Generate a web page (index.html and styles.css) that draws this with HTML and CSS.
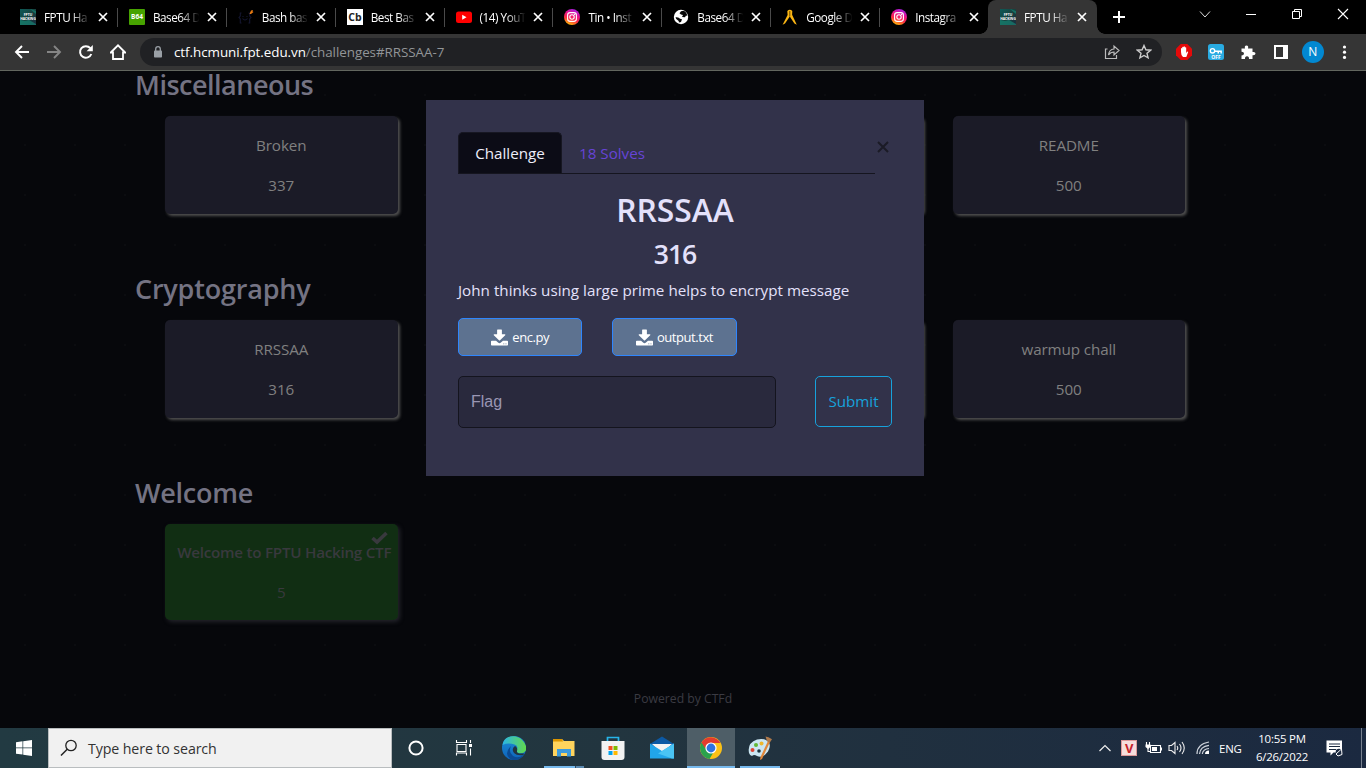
FILE: index.html
```html
<!DOCTYPE html>
<html lang="en">
<head>
<meta charset="utf-8">
<title>FPTU Hacking CTF</title>
<link rel="stylesheet" href="styles.css">
</head>
<body>
<svg class="defs" width="0" height="0">
  <defs>
    <linearGradient id="ig" x1="0.7" y1="0" x2="0.3" y2="1"><stop offset="0" stop-color="#a01fe8"/><stop offset=".35" stop-color="#e8118c"/><stop offset=".65" stop-color="#fb2a45"/><stop offset="1" stop-color="#ffc400"/></linearGradient>
    <linearGradient id="fp" x1="0" y1="0" x2="1" y2="1"><stop offset="0" stop-color="#0d5a57"/><stop offset=".5" stop-color="#17423f"/><stop offset="1" stop-color="#1b2b3f"/></linearGradient>
    <linearGradient id="edge1" x1="0" y1="0" x2="1" y2="0"><stop offset="0" stop-color="#2bb5e5"/><stop offset="1" stop-color="#62d94b"/></linearGradient>
    <linearGradient id="edge2" x1="0" y1="0" x2="0" y2="1"><stop offset="0" stop-color="#1c8fd8"/><stop offset="1" stop-color="#0e62b8"/></linearGradient>
    <symbol id="x" viewBox="0 0 10 10"><path d="M1 1l8 8M9 1l-8 8" stroke="#fff" stroke-width="1.7" fill="none"/></symbol>
    <symbol id="insta" viewBox="0 0 16 16"><circle cx="8" cy="8" r="8" fill="url(#ig)"/><rect x="3.6" y="3.6" width="8.8" height="8.8" rx="2.6" fill="none" stroke="#fff" stroke-width="1.1"/><circle cx="8" cy="8" r="2.2" fill="none" stroke="#fff" stroke-width="1.1"/><circle cx="10.6" cy="5.4" r=".6" fill="#fff"/></symbol>
    <symbol id="fptu" viewBox="0 0 16 16"><rect width="16" height="16" fill="url(#fp)"/><path d="M0 11l5 1 4-1 7 4v1H0zM10 0l6 5V2z" fill="#16917b" opacity=".6"/><text x="8" y="7.2" class="fav-tiny">FPTU</text><text x="8" y="11" class="fav-tiny">HACKING</text></symbol>
    <symbol id="download" viewBox="0 0 512 512"><path fill="#fff" d="M200 16h112q16 0 16 16v128h88q28 3 12 26L272 342q-16 14-32 0L84 186q-14-22 12-26h88V32q0-16 16-16zM24 352h128l60 58q44 32 88 0l60-58h128q24 0 24 24v96q0 24-24 24H24q-24 0-24-24v-96q0-24 24-24z"/><path fill="#5d7290" d="M370 440h30v20h-30zM436 440h30v20h-30z"/></symbol>
  </defs>
</svg>
<div class="screen">
  <header class="tabs">
    <div class="tab"><svg class="fav"><use href="#fptu"/></svg><span class="title">FPTU Ha</span><svg class="close"><use href="#x"/></svg></div>
    <div class="tab"><svg class="fav" viewBox="0 0 16 16"><rect width="16" height="16" rx="1" fill="#47a300"/><text x="8" y="10.4" class="fav-b64">B64</text></svg><span class="title">Base64 D</span><svg class="close"><use href="#x"/></svg></div>
    <div class="tab"><svg class="fav" viewBox="0 0 16 16"><path d="M3.500 4H2.300v3L1 8.500 2.300 10v4h1.200M10.500 4h1.200v3L13 8.500 11.700 10v4h-1.200M4.500 9.500q2.500 3 5 0M5 7v1M9 7v1" fill="none" stroke="#141630" stroke-width="1.100"/><path d="M11.500 5L13 1.500l2-.5-.5 1.500 1 .5-2.500 2z" fill="#e97b12"/></svg><span class="title">Bash bas</span><svg class="close"><use href="#x"/></svg></div>
    <div class="tab"><svg class="fav" viewBox="0 0 16 16"><rect width="16" height="16" fill="#fff"/><text x="8" y="11.500" class="fav-cb">Cb</text></svg><span class="title">Best Bas</span><svg class="close"><use href="#x"/></svg></div>
    <div class="tab"><svg class="fav" viewBox="0 0 16 16"><rect y="2.500" width="16" height="11.500" rx="2.500" fill="#f00"/><path d="M6.200 5.800v5l4.300-2.500z" fill="#fff"/></svg><span class="title">(14) YouT</span><svg class="close"><use href="#x"/></svg></div>
    <div class="tab"><svg class="fav"><use href="#insta"/></svg><span class="title">Tin • Inst</span><svg class="close"><use href="#x"/></svg></div>
    <div class="tab"><svg class="fav" viewBox="0 0 16 16"><circle cx="8" cy="8" r="7.200" fill="#fff"/><path d="M2.500 8.300q3.500-.5 4.500 1.500l2 .5-1 2.700-2 .5q0-2-1.500-2.500T2.500 8.300zM8 2.200l-1.500 2L8 5.500l2 .5-1 2 3 .3 1-1.800 1.200.5Q14 3 10.500 1.800z" fill="#080808"/></svg><span class="title">Base64 D</span><svg class="close"><use href="#x"/></svg></div>
    <div class="tab"><svg class="fav" viewBox="0 0 16 16"><path d="M5.300 2q2.500-2.500 5 0l-.2 3.800 4.700 10-2.400-1.300L7.800 7.500 3 14.500.6 15.800 5.600 6z" fill="#fbb614"/><path d="M7.800 2v5.500" stroke="#6b4a00"/></svg><span class="title">Google D</span><svg class="close"><use href="#x"/></svg></div>
    <div class="tab last"><svg class="fav"><use href="#insta"/></svg><span class="title">Instagra</span><svg class="close"><use href="#x"/></svg></div>
    <div class="tab active"><svg class="fav"><use href="#fptu"/></svg><span class="title">FPTU Ha</span><svg class="close"><use href="#x"/></svg></div>
    <svg class="plus" viewBox="0 0 12 12"><path d="M6 0v12M0 6h12" stroke="#fff" stroke-width="2"/></svg>
    <div class="controls">
      <svg viewBox="0 0 46 28"><path d="M18 11.500l5 5.500 5-5.500" fill="none" stroke="#ddd"/></svg>
      <svg viewBox="0 0 46 28"><path d="M18 14.500h10" stroke="#fff"/></svg>
      <svg viewBox="0 0 46 28"><path d="M18.500 11.500h7v7h-7zM20.500 11.500v-2h7v7h-2" fill="none" stroke="#fff"/></svg>
      <svg viewBox="0 0 46 28"><path d="M18 9l10 10M28 9L18 19" stroke="#fff" stroke-width="1.100"/></svg>
    </div>
  </header>
  <nav class="toolbar">
    <svg class="nav" viewBox="0 0 16 16"><path d="M15 8H2M8 2L2 8l6 6" fill="none" stroke="#fff" stroke-width="1.900"/></svg>
    <svg class="nav" viewBox="0 0 16 16"><path d="M1 8h13M8 2l6 6-6 6" fill="none" stroke="#858585" stroke-width="1.900"/></svg>
    <svg class="nav" viewBox="0 0 16 16"><path d="M13.300 10A5.800 5.800 0 1 1 12.300 4.200" fill="none" stroke="#fff" stroke-width="2"/><path d="M14.800 1v6.200H8.600z" fill="#fff"/></svg>
    <svg class="nav" viewBox="0 0 16 16"><path d="M.8 8.500L8 1.300l7.200 7.200H13V15H3V8.500z" fill="none" stroke="#fff" stroke-width="1.800"/></svg>
    <div class="address">
      <svg class="lock" viewBox="0 0 10 12"><rect x="1" y="4.500" width="8" height="7" rx=".8" fill="#9aa0a6"/><path d="M2.700 5V3a2.300 2.300 0 0 1 4.600 0v2" fill="none" stroke="#9aa0a6" stroke-width="1.300"/></svg>
      <span class="host">ctf.hcmuni.fpt.edu.vn</span><span class="path">/challenges#RRSSAA-7</span>
      <svg class="share" viewBox="0 0 16 16"><path d="M3.500 5H1.500v9.500h11V11" fill="none" stroke="#bbb" stroke-width="1.200"/><path d="M4.500 11q.5-5.500 5.500-6V2l5 4.500-5 4.500V8Q6.500 8 4.500 11z" fill="none" stroke="#bbb" stroke-width="1.200"/></svg>
      <svg class="star" viewBox="0 0 16 16"><path d="M8 1.500l1.900 4.300 4.700.4-3.600 3.100 1.100 4.600L8 11.500l-4.100 2.400L5 9.300 1.400 6.200l4.700-.4z" fill="none" stroke="#ccc" stroke-width="1.400"/></svg>
    </div>
    <div class="extensions">
      <svg viewBox="0 0 16 16"><path d="M4.700 0h6.600L16 4.700v6.600L11.300 16H4.700L0 11.300V4.700z" fill="#e50a0a"/><path d="M5 8V4.500q.6-.8 1.200 0V7V3.200q.7-.8 1.300 0V7V2.700q.7-.8 1.400 0V7V3.600q.7-.8 1.300 0V9l1-1.300q1-.5 1 .3L10.300 13H7Q5 11.500 5 8z" fill="#fff"/></svg>
      <svg viewBox="0 0 16 16"><rect width="16" height="16" rx="2.500" fill="#29abe2"/><circle cx="4.500" cy="6.800" r="2.200" fill="none" stroke="#fff" stroke-width="1.400"/><path d="M6.700 6.500h7.200v3h-1.500V8H11v1.500H9.500V8H6.700z" fill="#fff"/><text x="8" y="15" class="off">OFF</text></svg>
      <svg viewBox="0 0 16 16"><path d="M1.500 4.500H5q-.8-3 1.500-3t1.500 3h4.500V8q3-.5 3 1.500t-3 1.700V15H9q.2-2.800-2-2.800T5 15H1.500v-3.500q2.500 0 2.500-1.900T1.500 7.800z" fill="#fff"/></svg>
      <svg viewBox="0 0 16 16"><path d="M1 1h14v14H1zM3 3v10h7V3z" fill="#fff" fill-rule="evenodd"/></svg>
      <span class="avatar">N</span>
      <svg viewBox="0 0 16 16"><g fill="#fff"><circle cx="8.500" cy="3" r="1.600"/><circle cx="8.500" cy="8.200" r="1.600"/><circle cx="8.500" cy="13.400" r="1.600"/></g></svg>
    </div>
  </nav>
  <main class="page">
    <section class="category">
      <h2 class="misc">Miscellaneous</h2>
      <div class="cards">
        <div class="card"><p>Broken</p><p>337</p></div>
        <div class="card"></div>
        <div class="card"></div>
        <div class="card"><p>README</p><p>500</p></div>
      </div>
    </section>
    <section class="category">
      <h2 class="crypto">Cryptography</h2>
      <div class="cards">
        <div class="card"><p>RRSSAA</p><p>316</p></div>
        <div class="card"></div>
        <div class="card"></div>
        <div class="card"><p>warmup chall</p><p>500</p></div>
      </div>
    </section>
    <section class="category">
      <h2 class="welcome">Welcome</h2>
      <div class="cards">
        <div class="card solved"><svg class="check" viewBox="0 0 17 13"><path d="M1.500 6.500l4.500 4L15.500 1.500" fill="none" stroke="#39393e" stroke-width="3.600"/></svg><p class="long">Welcome to FPTU Hacking CTF</p><p>5</p></div>
      </div>
    </section>
    <footer class="powered">Powered by CTFd</footer>
    <div class="modal">
      <div class="modal-head">
        <div class="modal-tabs"><span class="modal-tab current">Challenge</span><span class="modal-tab">18 Solves</span></div>
        <svg class="dismiss" viewBox="0 0 12 12"><path d="M1 1l10 10M11 1L1 11" stroke="#1b1b26" stroke-width="2"/></svg>
      </div>
      <h3 class="name">RRSSAA</h3>
      <h4 class="value">316</h4>
      <p class="desc">John thinks using large prime helps to encrypt message</p>
      <div class="files">
        <a class="file"><svg><use href="#download"/></svg><span>enc.py</span></a>
        <a class="file"><svg><use href="#download"/></svg><span>output.txt</span></a>
      </div>
      <div class="answer"><div class="flag">Flag</div><div class="submit">Submit</div></div>
    </div>
  </main>
  <footer class="taskbar">
    <div class="start"><svg viewBox="0 0 16 16"><path d="M0 2.200L6.500 1.300v6.200H0zM7.200 1.200L16 0v7.500H7.200zM0 8.300h6.500v6.300L0 13.700zM7.200 8.300H16V16l-8.800-1.200z" fill="#fff"/></svg></div>
    <div class="search"><svg viewBox="0 0 18 18"><circle cx="11" cy="6.500" r="5.200" fill="none" stroke="#222" stroke-width="1.300"/><path d="M7.200 10.200L1 16.500" stroke="#222" stroke-width="1.500"/></svg><span>Type here to search</span></div>
    <div class="apps">
      <div class="app"><svg viewBox="0 0 24 24"><circle cx="12" cy="12" r="6.600" fill="none" stroke="#fff" stroke-width="2"/></svg></div>
      <div class="app"><svg viewBox="0 0 24 24"><path d="M3.500 4v2.500h10V4M4 8.500h9v7H4zM3.500 19.500v-2.500h10v2.500M17.500 4v3M17.500 12.500v7" fill="none" stroke="#fff" stroke-width="1.100"/><path d="M16 8h3v3h-3z" fill="#fff"/></svg></div>
      <div class="app edge"><svg viewBox="0 0 24 24"><circle cx="12" cy="12" r="12" fill="url(#edge2)"/><path d="M.5 9C2-1 14-2 20 4q6 6 3.500 11-2 3-6.500 2.200-4-1-2-3.700 1.500-3.500-2.500-5Q6 6.500.5 9z" fill="url(#edge1)"/><path d="M9 10q-3 6 2 10 5 3 10.500-1Q16 26 9 23.500 1 18 9 10z" fill="#0b4a93"/><path d="M13 10q3 2 2 5-1 3 7 2.500l-.5 1.500Q15 20 12 17q-3-4 1-7z" fill="#21343f"/></svg></div>
      <div class="app running split"><svg viewBox="0 0 24 24"><path d="M1 3h9l2 2h10.500v15H1z" fill="#ffd45d"/><path d="M1 3h9l1 2.500H1z" fill="#dc9500"/><path d="M5 13h14v7.500h-4V17H9v3.500H5z" fill="#3d9bdc"/></svg></div>
      <div class="app"><svg viewBox="0 0 24 24"><path d="M6.500 6V1.500h11V6" fill="none" stroke="#27b5e9" stroke-width="1.700"/><path d="M.5 5h23v16q0 3-3 3h-17q-3 0-3-3z" fill="#f2f2f2"/><path d="M7.500 10h4v4h-4z" fill="#f25022"/><path d="M12.500 10h4v4h-4z" fill="#7fba00"/><path d="M7.500 15h4v4h-4z" fill="#00a4ef"/><path d="M12.500 15h4v4h-4z" fill="#ffb900"/></svg></div>
      <div class="app"><svg viewBox="0 0 24 24"><path d="M0 8l12-7.500L24 8v4H0z" fill="#0c59a4"/><path d="M2 8h20l-8 8h-4z" fill="#f3f3f3"/><path d="M0 7.500L12 15l12-7.500v15H0z" fill="#21a5ea"/><path d="M24 7.500L8 17.500l14 5h2z" fill="#4ac4f4"/></svg></div>
      <div class="app current running"><svg viewBox="0 0 24 24"><circle cx="12" cy="12" r="11" fill="#fbc116"/><path d="M12 12L2.500 6.500a11 11 0 0 0 8 16.400L17 12z" fill="#2ba24c"/><path d="M12 12H6L2.500 6.500A11 11 0 0 1 21.500 7H12z" fill="#e33b2e"/><circle cx="12" cy="12" r="5.600" fill="#fff"/><circle cx="12" cy="12" r="4.400" fill="#2f73e0"/></svg></div>
      <div class="app running"><svg viewBox="0 0 24 24"><path d="M1 17Q-1 7 9 3.500q8-2 12 3 2 4-1 9-5 7-11 4.500-3-2-5 0Q2 20 1 17z" fill="#cbe6f2"/><circle cx="4.500" cy="14" r="2" fill="#df4434"/><circle cx="8" cy="9" r="2" fill="#61b935"/><circle cx="13.500" cy="7.500" r="2" fill="#eeb72c"/><circle cx="11" cy="15" r="1.800" fill="#1a3340"/><path d="M20 5l2 1-8 17-2 1 .5-3z" fill="#df873b"/><path d="M17.500.5l3 .8 3.500 2-2 3-3-1z" fill="#ae794b"/></svg></div>
    </div>
    <div class="tray">
      <svg class="up" viewBox="0 0 12 8"><path d="M.5 7L6 1.500 11.500 7" fill="none" stroke="#eee" stroke-width="1.200"/></svg>
      <span class="vkey">V</span>
      <svg class="power" viewBox="0 0 17 14"><path d="M5.500 4.500h10v7h-10zM16.500 6.500v3M1.500 1v3M4.500 1v3M3 7v3.500h2" fill="none" stroke="#fff" stroke-width="1.100"/><path d="M.5 3.500h5V6L3 8 .5 6zM7 6h5v4H7z" fill="#fff"/></svg>
      <svg class="volume" viewBox="0 0 17 14"><path d="M1 4.500h2.500L7 1.500v11L3.500 9.500H1zM9 5q1.500 2 0 4M11.500 3q3 4 0 8M14 1q4.500 6 0 12" fill="none" stroke="#eee" stroke-width="1.100"/></svg>
      <svg class="wifi" viewBox="0 0 14 14"><path d="M1 13Q1 3 13 1M3.500 13Q4 5.500 13 4.300M6.300 13Q7 8 13 7.500" fill="none" stroke="#ccd2da" stroke-width="1.200"/><path d="M9 13q0-3.500 4-3.500V13z" fill="#fff"/></svg>
      <span class="lang">ENG</span>
      <div class="clock"><span>10:55 PM</span><span>6/26/2022</span></div>
      <svg class="notes" viewBox="0 0 17 17"><path d="M.5.500h15.500v12H7.500L4.500 15.500v-3h-4z" fill="#fff"/><path d="M3 4h11M3 6.500h11M3 9.500h7" stroke="#1b2940"/><circle cx="13" cy="12" r="3.300" fill="#1b2940"/><path d="M10 14l5.500-5 .5 5.500-4 1.500z" fill="#1b2940" stroke="#fff"/></svg>
      <span class="desktop"></span>
    </div>
  </footer>
</div>
</body>
</html>
```
FILE: styles.css
```css
* { box-sizing: border-box; }
body { margin: 0; overflow: hidden; font-family: "Open Sans", "Noto Sans", sans-serif; }
h2, h3, h4, p { margin: 0; }
.defs { display: block; position: absolute; }
.screen { width: 1366px; height: 768px; display: flex; flex-direction: column; }

.tabs { height: 34px; flex: none; display: flex; background: #000; padding-left: 9px; }
.tab { width: 108.9px; height: 34px; flex: none; display: flex; align-items: center; padding: 0 10px 0 11px; position: relative; }
.tab::after { content: ""; position: absolute; right: 0; top: 8px; width: 1px; height: 19px; background: #4a4a4a; }
.tab.last::after, .tab.active::after { display: none; }
.fav { width: 16px; height: 16px; flex: none; margin-right: 8px; }
.title { width: 49px; margin-right: 5px; white-space: nowrap; color: #fff; font-size: 11.700px; line-height: 18px; letter-spacing: -.45px; -webkit-mask-image: linear-gradient(90deg, #000 55%, transparent 95%); mask-image: linear-gradient(90deg, #000 55%, transparent 95%); }
.close { width: 10px; height: 10px; flex: none; }
.tab.active { background: #353535; border-radius: 8px 8px 0 0; margin-left: -1px; padding-left: 12px; }
.tab.active::before { content: ""; position: absolute; z-index: 1; bottom: 0; left: -8px; width: 125px; height: 8px; background: radial-gradient(circle at 0 0, transparent 7.500px, #353535 8px) 0 0 / 8px 8px no-repeat, radial-gradient(circle at 100% 0, transparent 7.500px, #353535 8px) 100% 0 / 8px 8px no-repeat; }
.plus { width: 12px; height: 12px; margin: 11px 0 0 16px; }
.controls { display: flex; margin-left: auto; }
.controls svg { width: 46px; height: 28px; }
.fav-tiny, .fav-b64, .fav-cb, .off { font-family: "Open Sans", sans-serif; font-weight: 700; text-anchor: middle; fill: #fff; }
.fav-tiny { font-size: 3.400px; }
.fav-b64 { font-size: 6.500px; }
.fav-cb { font-size: 10.500px; fill: #222; }
.off { font-size: 5px; }

.toolbar { height: 37px; flex: none; display: flex; align-items: center; background: #353535; border-bottom: 1px solid #62665f; padding: 0 14px 0 14px; }
.nav { width: 16px; height: 16px; margin-right: 16px; flex: none; }
.address { width: 1022px; height: 28px; display: flex; align-items: center; border-radius: 14px; background: #202124; margin-left: -2px; padding: 0 10px 0 13px; font-size: 13.400px; letter-spacing: -.05px; white-space: nowrap; }
.lock { width: 10px; height: 12px; margin-right: 11px; }
.host { color: #fff; }
.path { color: #929598; }
.share { width: 16px; height: 16px; margin-left: auto; }
.star { width: 16px; height: 16px; margin-left: 16px; }
.extensions { flex: 1; display: flex; align-items: center; justify-content: space-between; padding-left: 14px; }
.extensions svg { width: 16px; height: 16px; }
.extensions svg:last-child { margin-left: -1px; }
.avatar { width: 22px; height: 22px; border-radius: 50%; background: #0288d1; color: #fff; text-align: center; font-size: 12px; line-height: 22px; margin: 0 -3px; }

.page { height: 657px; flex: none; position: relative; padding: 0 135px; background: radial-gradient(circle, #0b0c10 0 1px, transparent 1.500px) 0 -1px / 50px 50px #06070b; }
.category { height: 204px; }
.category h2 { height: 45px; font-size: 27px; line-height: 28px; font-weight: 600; color: #747383; }
.category .misc { letter-spacing: -.5px; }
.category .crypto { letter-spacing: -.2px; line-height: 27px; }
.category .welcome { letter-spacing: -.25px; line-height: 27px; }
.cards { display: grid; grid-template-columns: repeat(4, 232.500px); column-gap: 30px; padding-left: 30px; }
.card { height: 98px; border-radius: 5px; background: #1b1b27; box-shadow: 2px 2px 3px #505050; color: #808080; text-align: center; font-size: 15.200px; line-height: 24px; letter-spacing: -.1px; padding-top: 17px; position: relative; }
.card p + p { margin-top: 16px; }
.solved { height: 96px; padding-top: 16px; background: #112e13; color: #39393e; box-shadow: 2px 2px 4px #24242b; }
.long { font-weight: 600; white-space: nowrap; margin-left: 6px; letter-spacing: -.25px; }
.check { position: absolute; right: 10px; top: 7px; width: 17px; height: 14px; }
.powered { color: #3b3b43; text-align: center; font-size: 12.200px; line-height: 18px; margin-top: 7px; }

.modal { position: absolute; left: 426px; top: 29px; width: 498px; height: 376px; padding: 32px; background: #32324a; color: #e4e1fb; font-size: 15.200px; }
.modal-head { display: flex; height: 42px; }
.modal-tabs { width: 417px; display: flex; border-bottom: 1px solid #15151f; }
.modal-tab { padding: 0 17px; line-height: 42px; color: #6644d6; }
.modal-tab.current { width: 104px; padding: 0; text-align: center; line-height: 40px; color: #eeeefa; background: #0c0c16; border: 1px solid #171722; border-bottom: 0; border-radius: 5px 5px 0 0; }
.dismiss { width: 12px; height: 12px; margin: 9px 0 0 2px; }
.name { height: 48px; margin-top: 16px; text-align: center; font-size: 31.800px; line-height: 40px; font-weight: 600; }
.value { height: 36px; text-align: center; font-size: 26.600px; line-height: 32px; font-weight: 600; letter-spacing: -1px; }
.desc { line-height: 32px; height: 44px; letter-spacing: .02px; white-space: nowrap; }
.files { display: flex; gap: 30px; }
.file { width: 124.300px; height: 38px; display: flex; align-items: center; justify-content: center; gap: 4px; border: 1px solid #2e86ff; border-radius: 5px; background: #5d7290; color: #fff; font-size: 13px; letter-spacing: -.45px; }
.file svg { width: 17px; height: 17px; margin-top: 0; }
.answer { display: flex; justify-content: space-between; width: 434px; margin-top: 20px; }
.flag { width: 318px; height: 52px; padding-left: 12px; border: 1px solid #14141e; border-radius: 5px; background: #29293d; color: #9a96b4; font: 16px/49px "Liberation Sans", Arial, sans-serif; }
.submit { width: 77px; height: 51px; border: 1px solid #17a2dc; border-radius: 5px; color: #17a2dc; text-align: center; line-height: 49px; }

.taskbar { height: 40px; flex: none; display: flex; background: linear-gradient(90deg, #223a42, #22353f 45%, #20303f 65%, #1b2940); color: #fff; }
.start { width: 48px; display: flex; align-items: center; justify-content: center; }
.start svg { width: 16px; height: 16px; }
.search { width: 344px; display: flex; align-items: center; gap: 10px; background: #f1f1f1; border: 1px solid #b9bdbf; padding-left: 11px; color: #333; font-size: 14.200px; letter-spacing: -.1px; }
.search svg { width: 18px; height: 18px; }
.apps { display: flex; }
.app { width: 48px; margin-right: 1.200px; height: 40px; display: flex; align-items: center; justify-content: center; position: relative; }
.app svg { width: 24px; height: 24px; }
.app.running::after { content: ""; position: absolute; left: 4px; right: 4px; bottom: 0; height: 2px; background: #76b9ed; }
.app.split::after { background: linear-gradient(90deg, #76b9ed 31px, #33485a 31px 32px, #5a89b0 32px); }
.app.current { background: #4e5e67; }
.app.current::after { left: 0; right: 0; }
.tray { flex: 1; display: flex; align-items: center; justify-content: flex-end; font-size: 11.400px; letter-spacing: -.2px; }
.up { width: 12px; height: 8px; margin-right: 10px; }
.vkey { width: 16px; height: 16px; background: #f6dedc; border: 1px solid #d99; color: #c5232b; font-weight: 700; font-size: 13px; line-height: 14px; text-align: center; margin-right: 8px; }
.power { width: 17px; height: 14px; margin-right: 6px; }
.volume { width: 17px; height: 14px; margin-right: 11px; }
.wifi { width: 14px; height: 14px; margin-right: 9px; }
.lang { width: 25px; margin-right: 10px; }
.clock { width: 56px; display: flex; flex-direction: column; align-items: center; line-height: 18px; white-space: nowrap; margin-right: 16px; }
.notes { width: 17px; height: 17px; margin-right: 18px; }
.desktop { width: 5px; height: 40px; border-left: 1px solid #78818f; }
```
